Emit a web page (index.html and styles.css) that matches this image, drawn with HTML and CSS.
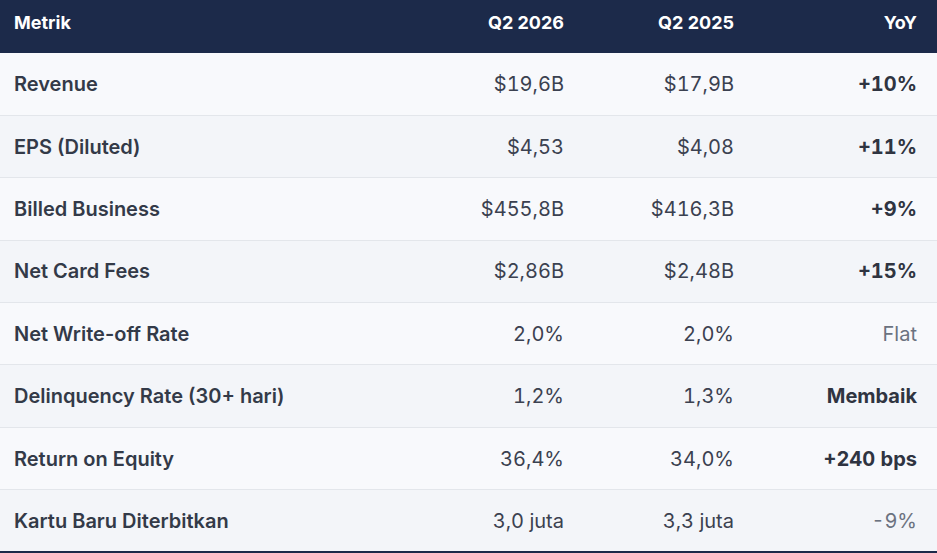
FILE: index.html
```html
<!DOCTYPE html>
<html lang="id">
<head>
<meta charset="utf-8">
<link rel="stylesheet" href="styles.css">
</head>
<body>
<table class="metrics">
  <colgroup>
    <col class="c-name"><col class="c-num"><col class="c-num"><col class="c-yoy">
  </colgroup>
  <thead>
    <tr><th class="name">Metrik</th><th>Q2 2026</th><th>Q2 2025</th><th>YoY</th></tr>
  </thead>
  <tbody>
    <tr><td class="name">Revenue</td><td>$19,6B</td><td>$17,9B</td><td class="yoy">+10%</td></tr>
    <tr><td class="name">EPS (Diluted)</td><td>$4,53</td><td>$4,08</td><td class="yoy">+11%</td></tr>
    <tr><td class="name">Billed Business</td><td>$455,8B</td><td>$416,3B</td><td class="yoy">+9%</td></tr>
    <tr><td class="name">Net Card Fees</td><td>$2,86B</td><td>$2,48B</td><td class="yoy">+15%</td></tr>
    <tr><td class="name">Net Write-off Rate</td><td>2,0%</td><td>2,0%</td><td class="muted">Flat</td></tr>
    <tr><td class="name">Delinquency Rate (30+ hari)</td><td>1,2%</td><td>1,3%</td><td class="yoy">Membaik</td></tr>
    <tr><td class="name">Return on Equity</td><td>36,4%</td><td>34,0%</td><td class="yoy">+240 bps</td></tr>
    <tr><td class="name">Kartu Baru Diterbitkan</td><td>3,0 juta</td><td>3,3 juta</td><td class="muted">-9%</td></tr>
  </tbody>
</table>
</body>
</html>
```
FILE: styles.css
```css
html, body {
  margin: 0;
  padding: 0;
  background: #ffffff;
}
body {
  font-family: Inter, "Noto Sans", sans-serif;
}
.metrics {
  width: 937px;
  border-collapse: collapse;
  table-layout: fixed;
  border-bottom: 2px solid #1c2a4a;
}
.c-name { width: 414px; }
.c-num { width: 170px; }
.c-yoy { width: 183px; }
.metrics th {
  background: #1c2a4a;
  color: #ffffff;
  font-size: 18px;
  font-weight: 700;
  text-align: right;
  height: 53px;
  padding: 0 20px 8px 14px;
  box-sizing: border-box;
}
.metrics th.name,
.metrics td.name {
  text-align: left;
}
.metrics td {
  height: 62.4px;
  box-sizing: border-box;
  padding: 0 20px 0 14px;
  text-align: right;
  font-size: 20px;
  color: #3b4150;
  font-variant-numeric: tabular-nums;
  border-top: 1px solid #e3e6eb;
}
.metrics tbody tr:first-child td { border-top: none; }
.metrics tbody tr:nth-child(odd) { background: #f8f9fc; }
.metrics tbody tr:nth-child(even) { background: #f3f5f9; }
.metrics td.name {
  font-weight: 600;
  color: #333a48;
  font-variant-numeric: normal;
}
.metrics td.yoy {
  font-weight: 700;
  color: #2f3441;
}
.metrics td.muted {
  color: #6b7280;
}
```
